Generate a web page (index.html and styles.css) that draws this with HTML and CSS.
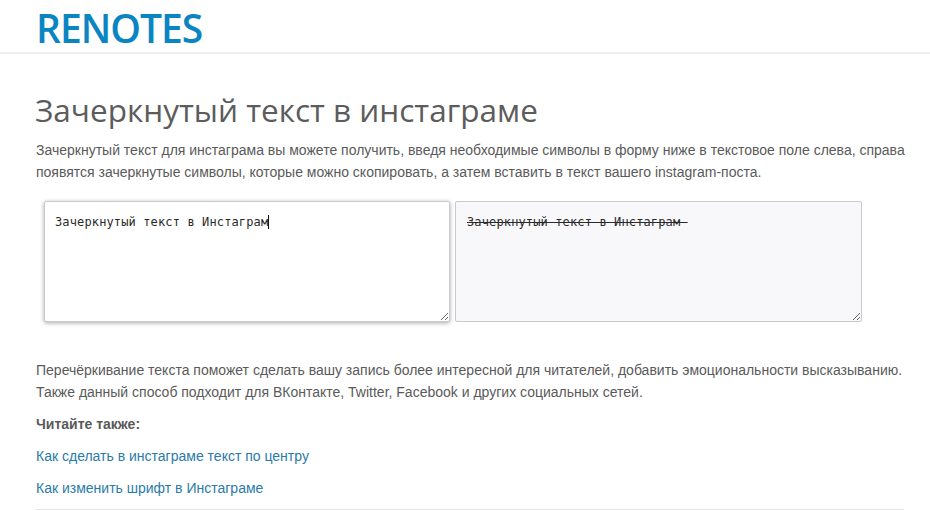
FILE: index.html
```html
<!DOCTYPE html>
<html lang="ru">
<head>
<meta charset="utf-8">
<title>Зачеркнутый текст в инстаграме</title>
<link rel="stylesheet" href="styles.css">
</head>
<body>
<header class="site-header"><a class="logo" href="#">RENOTES</a></header>
<main class="content">
<h1 class="title">Зачеркнутый текст в инстаграме</h1>
<p class="text">Зачеркнутый текст для инстаграма вы можете получить, введя необходимые символы в форму ниже в текстовое поле слева, справа появятся зачеркнутые символы, которые можно скопировать, а затем вставить в текст вашего instagram-поста.</p>
<div class="fields">
<div class="field field-active">Зачеркнутый текст в Инстаграм<span class="caret"></span></div>
<div class="field field-output"><span class="struck">Зачеркнутый текст в Инстаграм </span></div>
</div>
<p class="text">Перечёркивание текста поможет сделать вашу запись более интересной для читателей, добавить эмоциональности высказыванию. Также данный способ подходит для ВКонтакте, Twitter, Facebook и других социальных сетей.</p>
<p class="text"><strong>Читайте также:</strong></p>
<p class="text"><a class="link" href="#">Как сделать в инстаграме текст по центру</a></p>
<p class="text"><a class="link" href="#">Как изменить шрифт в Инстаграме</a></p>
<hr class="rule">
</main>
</body>
</html>
```
FILE: styles.css
```css
html, body { margin: 0; padding: 0; height: 511px; overflow: hidden; background: #fff; }
body { font-family: "Liberation Sans", Arial, sans-serif; font-size: 14px; line-height: 22px; color: #5a5a5a; }
.site-header { height: 52px; border-bottom: 2px solid #eee; padding-left: 36px; }
.logo { display: block; font-family: "Open Sans", sans-serif; font-weight: 600; font-size: 39px; line-height: 56px; letter-spacing: -1px; color: #0a85c2; text-decoration: none; }
.content { padding: 0 20px 0 36px; }
.title { margin: 36px 0 9px -1px; font-family: "Open Sans", sans-serif; font-weight: 400; font-size: 31.5px; line-height: 40px; color: #5c5c5c; }
.text { margin: 0 0 10px; }
.fields { display: flex; gap: 5px; margin: 18px 0 0 8px; padding-bottom: 37px; }
.field { box-sizing: border-box; flex: none; width: 406px; height: 121px; padding: 9px 10px; border: 1px solid #c9c9cf; border-radius: 2px; font-family: "DejaVu Sans Mono", monospace; font-size: 12px; letter-spacing: .13px; line-height: 22px; color: #2a2a2a; overflow: auto; resize: both; white-space: pre-wrap; }
.field-active { background: #fff; box-shadow: 0 1px 4px rgba(0,0,0,.35); }
.field-output { width: 407px; padding-left: 11px; background: #f8f7fa; }
.struck { text-decoration: line-through; }
.caret { display: inline-block; width: 1px; height: 14px; background: #111; vertical-align: -3px; }
.link { color: #2a7ba8; text-decoration: none; }
.rule { margin: 0 6px 0 0; border: 0; border-top: 1px solid #e5e5e5; }
```
